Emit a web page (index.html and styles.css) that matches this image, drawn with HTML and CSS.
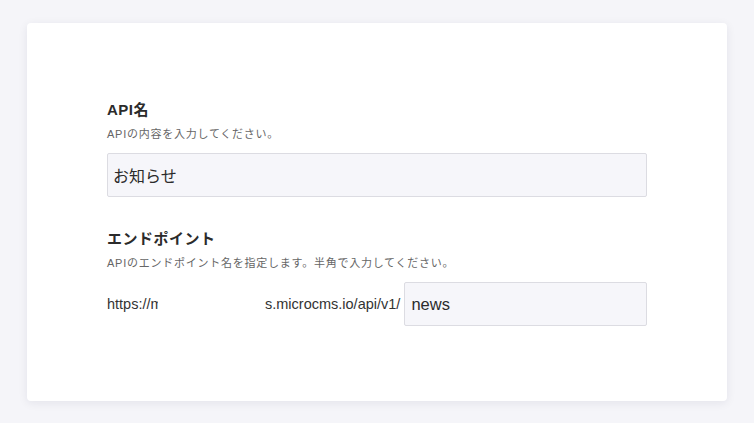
FILE: index.html
```html
<!DOCTYPE html>
<html lang="ja">
<head>
    <meta charset="UTF-8">
    <meta name="viewport" content="width=device-width, initial-scale=1.0">
    <title>API設定</title>
    <link rel="stylesheet" href="styles.css">
</head>
<body>
    <div class="card">
        <div class="field">
            <div class="label">API名</div>
            <div class="hint">APIの内容を入力してください。</div>
            <input class="input" type="text" value="お知らせ">
        </div>
        <div class="field">
            <div class="label">エンドポイント</div>
            <div class="hint">APIのエンドポイント名を指定します。半角で入力してください。</div>
            <div class="url_row">
                <span class="url">https://m</span>
                <span class="url_mask"></span>
                <span class="url">s.microcms.io/api/v1/</span>
                <input class="input endpoint" type="text" value="news">
            </div>
        </div>
    </div>
</body>
</html>
```

FILE: styles.css
```css
*{
    margin: 0;
    padding: 0;
    box-sizing: border-box;
}
body{
    background: #f5f5f9;
    font-family: "Liberation Sans", "Noto Sans CJK JP", sans-serif;
    color: #333;
    padding: 23px 27px 22px;
}
.card{
    width: 700px;
    height: 378px;
    background: #fff;
    border-radius: 4px;
    box-shadow: 0 2px 10px rgba(30, 30, 70, 0.08);
    padding: 76px 80px 0;
}
.field{
    width: 540px;
    margin-bottom: 31px;
}
.label{
    font-size: 15px;
    font-weight: bold;
    line-height: 22px;
    color: #2b2b2b;
    letter-spacing: 0.5px;
}
.hint{
    font-size: 11px;
    line-height: 16px;
    color: #666;
    margin-top: 5px;
    margin-bottom: 11px;
    letter-spacing: 0.75px;
}
.input{
    display: block;
    width: 540px;
    height: 44px;
    background: #f6f6fa;
    border: 1px solid #dcdce2;
    border-radius: 2px;
    padding: 0 5px;
    font-family: "Liberation Sans", "Noto Sans CJK JP", sans-serif;
    font-size: 16px;
    color: #2b2b2b;
    outline: none;
}
.url_row{
    display: flex;
    align-items: center;
}
.url{
    font-size: 14.5px;
    color: #333;
    white-space: nowrap;
}
.url:first-child{
    width: 51px;
    overflow: hidden;
}
.url_mask{
    width: 107px;
}
.input.endpoint{
    flex: 1;
    width: auto;
    min-width: 0;
    margin-left: 4px;
    padding-left: 6px;
    font-size: 16.5px;
}
```
